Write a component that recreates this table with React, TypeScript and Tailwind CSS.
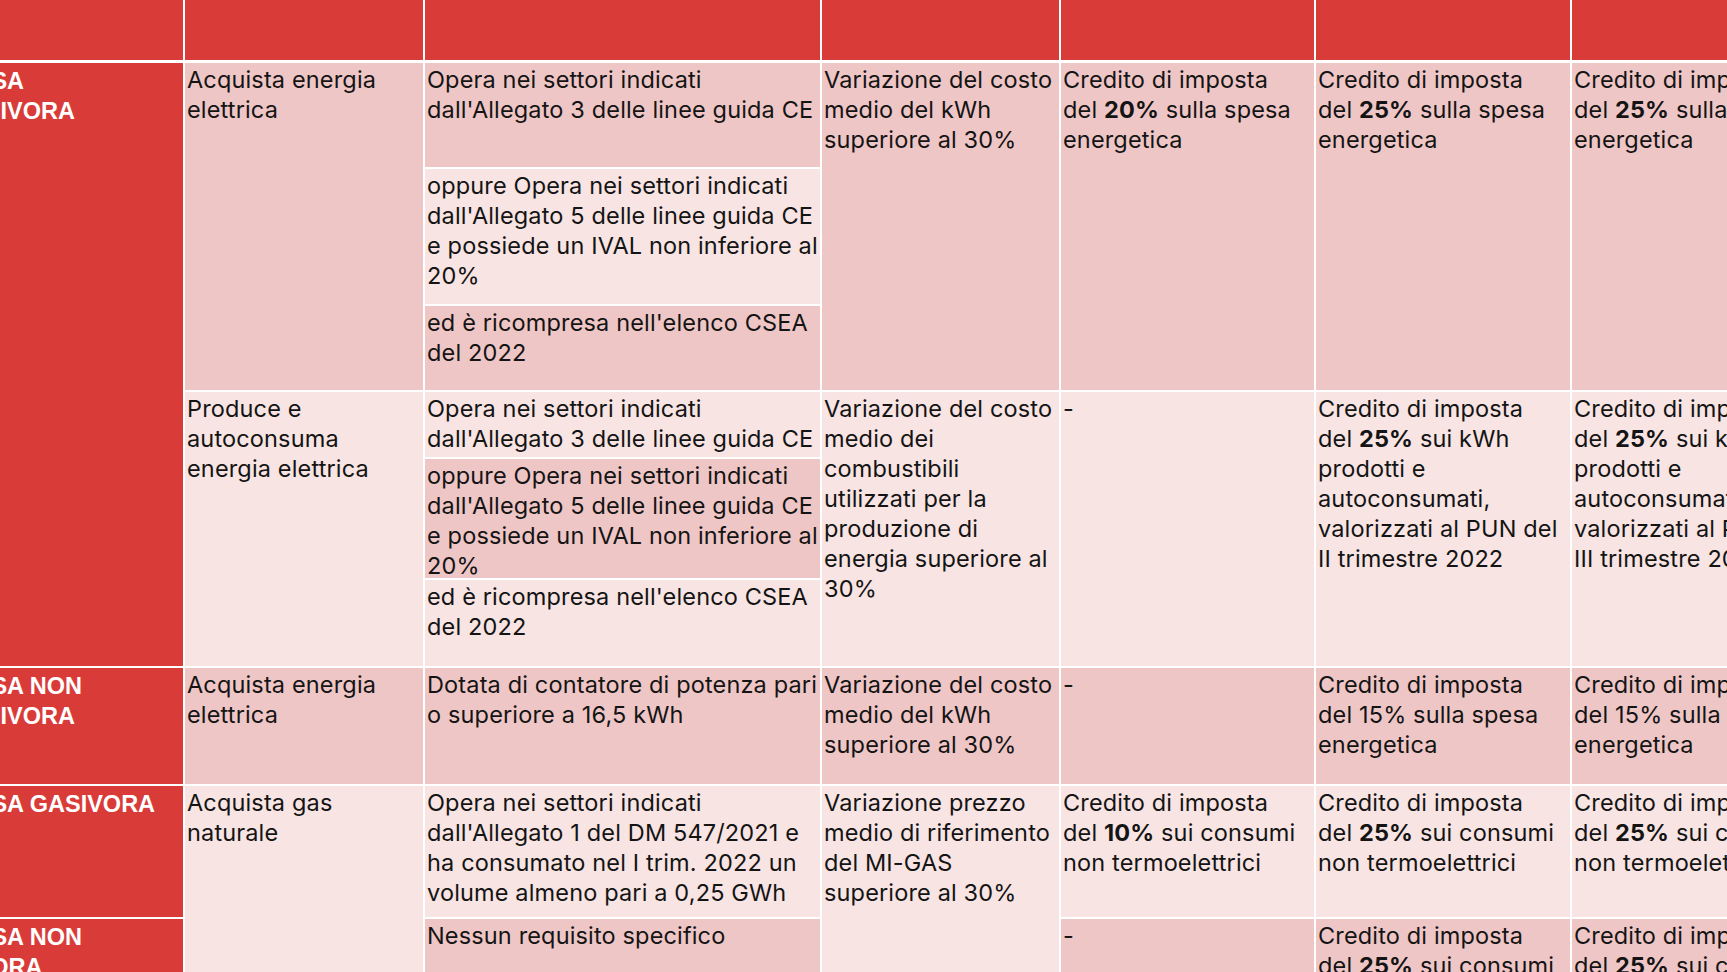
import type { ReactNode } from "react";

type Tone = "red" | "dark" | "light";

const toneClass: Record<Tone, string> = {
  red: "bg-[#d93c38] text-white font-bold text-[23.5px] pl-[3px] pt-[3px] [font-family:'Liberation_Sans',Arial,sans-serif]",
  dark: "bg-[#efc6c6] text-[#141414] text-[23.5px] tracking-[0.15px] pl-[2px] pt-[2px] [font-family:Inter,'Liberation_Sans',sans-serif]",
  light: "bg-[#f8e4e3] text-[#141414] text-[23.5px] tracking-[0.15px] pl-[2px] pt-[2px] [font-family:Inter,'Liberation_Sans',sans-serif]",
};

function B({ children }: { children: ReactNode }) {
  return <span className="font-bold">{children}</span>;
}

// one table cell; lines are broken by hand as in the source document
function Cell({ tone, lines = [], className }: { tone: Tone; lines?: ReactNode[]; className: string }) {
  return (
    <div className={`${toneClass[tone]} ${className} overflow-hidden leading-[30px] whitespace-nowrap`}>
      {lines.map((l, i) => (
        <div key={i}>{l}</div>
      ))}
    </div>
  );
}

const allegato3 = ["Opera nei settori indicati", "dall'Allegato 3 delle linee guida CE"];
const allegato5 = [
  "oppure Opera nei settori indicati",
  "dall'Allegato 5 delle linee guida CE",
  "e possiede un IVAL non inferiore al",
  "20%",
];
const csea = ["ed è ricompresa nell'elenco CSEA", "del 2022"];
const costoKwh = ["Variazione del costo", "medio del kWh", "superiore al 30%"];

export default function App() {
  return (
    <div className="w-full h-[972px] overflow-hidden bg-white">
      <div className="-ml-[86px] grid grid-cols-[269px_238px_395px_237px_253px_254px_254px] grid-rows-[61px_104px_135px_84px_65px_119px_86px_116px_131px_120px] gap-[2px] bg-white w-max">
        {/* header */}
        {[1, 2, 3, 4, 5, 6, 7].map((c) => (
          <div key={c} className="row-start-1 h-[60px] bg-[#d93c38]" style={{ gridColumnStart: c }} />
        ))}

        {/* tipo impresa */}
        <Cell tone="red" className="col-start-1 row-start-2 row-span-6" lines={["IMPRESA", "ENERGIVORA"]} />
        <Cell tone="red" className="col-start-1 row-start-8" lines={["IMPRESA NON", "ENERGIVORA"]} />
        <Cell tone="red" className="col-start-1 row-start-9" lines={["IMPRESA GASIVORA"]} />
        <Cell tone="red" className="col-start-1 row-start-10" lines={["IMPRESA NON", "GASIVORA"]} />

        {/* attività */}
        <Cell tone="dark" className="col-start-2 row-start-2 row-span-3" lines={["Acquista energia", "elettrica"]} />
        <Cell tone="light" className="col-start-2 row-start-5 row-span-3" lines={["Produce e", "autoconsuma", "energia elettrica"]} />
        <Cell tone="dark" className="col-start-2 row-start-8" lines={["Acquista energia", "elettrica"]} />
        <Cell tone="light" className="col-start-2 row-start-9 row-span-2" lines={["Acquista gas", "naturale"]} />

        {/* requisiti */}
        <Cell tone="dark" className="col-start-3 row-start-2" lines={allegato3} />
        <Cell tone="light" className="col-start-3 row-start-3" lines={allegato5} />
        <Cell tone="dark" className="col-start-3 row-start-4" lines={csea} />
        <Cell tone="light" className="col-start-3 row-start-5" lines={allegato3} />
        <Cell tone="dark" className="col-start-3 row-start-6" lines={allegato5} />
        <Cell tone="light" className="col-start-3 row-start-7" lines={csea} />
        <Cell
          tone="dark"
          className="col-start-3 row-start-8"
          lines={["Dotata di contatore di potenza pari", "o superiore a 16,5 kWh"]}
        />
        <Cell
          tone="light"
          className="col-start-3 row-start-9"
          lines={[
            "Opera nei settori indicati",
            "dall'Allegato 1 del DM 547/2021 e",
            "ha consumato nel I trim. 2022 un",
            "volume almeno pari a 0,25 GWh",
          ]}
        />
        <Cell tone="dark" className="col-start-3 row-start-10" lines={["Nessun requisito specifico"]} />

        {/* condizione */}
        <Cell tone="dark" className="col-start-4 row-start-2 row-span-3" lines={costoKwh} />
        <Cell
          tone="light"
          className="col-start-4 row-start-5 row-span-3"
          lines={[
            "Variazione del costo",
            "medio dei",
            "combustibili",
            "utilizzati per la",
            "produzione di",
            "energia superiore al",
            "30%",
          ]}
        />
        <Cell tone="dark" className="col-start-4 row-start-8" lines={costoKwh} />
        <Cell
          tone="light"
          className="col-start-4 row-start-9 row-span-2"
          lines={["Variazione prezzo", "medio di riferimento", "del MI-GAS", "superiore al 30%"]}
        />

        {/* primo trimestre */}
        <Cell
          tone="dark"
          className="col-start-5 row-start-2 row-span-3"
          lines={["Credito di imposta", <>del <B>20%</B> sulla spesa</>, "energetica"]}
        />
        <Cell tone="light" className="col-start-5 row-start-5 row-span-3" lines={["-"]} />
        <Cell tone="dark" className="col-start-5 row-start-8" lines={["-"]} />
        <Cell
          tone="light"
          className="col-start-5 row-start-9"
          lines={["Credito di imposta", <>del <B>10%</B> sui consumi</>, "non termoelettrici"]}
        />
        <Cell tone="dark" className="col-start-5 row-start-10" lines={["-"]} />

        {/* secondo e terzo trimestre */}
        {[
          { col: "col-start-6", trim: "II" },
          { col: "col-start-7", trim: "III" },
        ].map(({ col, trim }) => (
          <div key={trim} className="contents">
            <Cell
              tone="dark"
              className={`${col} row-start-2 row-span-3`}
              lines={["Credito di imposta", <>del <B>25%</B> sulla spesa</>, "energetica"]}
            />
            <Cell
              tone="light"
              className={`${col} row-start-5 row-span-3`}
              lines={[
                "Credito di imposta",
                <>del <B>25%</B> sui kWh</>,
                "prodotti e",
                "autoconsumati,",
                "valorizzati al PUN del",
                `${trim} trimestre 2022`,
              ]}
            />
            <Cell
              tone="dark"
              className={`${col} row-start-8`}
              lines={["Credito di imposta", "del 15% sulla spesa", "energetica"]}
            />
            <Cell
              tone="light"
              className={`${col} row-start-9`}
              lines={["Credito di imposta", <>del <B>25%</B> sui consumi</>, "non termoelettrici"]}
            />
            <Cell
              tone="dark"
              className={`${col} row-start-10`}
              lines={["Credito di imposta", <>del <B>25%</B> sui consumi</>, "non termoelettrici"]}
            />
          </div>
        ))}
      </div>
    </div>
  );
}
